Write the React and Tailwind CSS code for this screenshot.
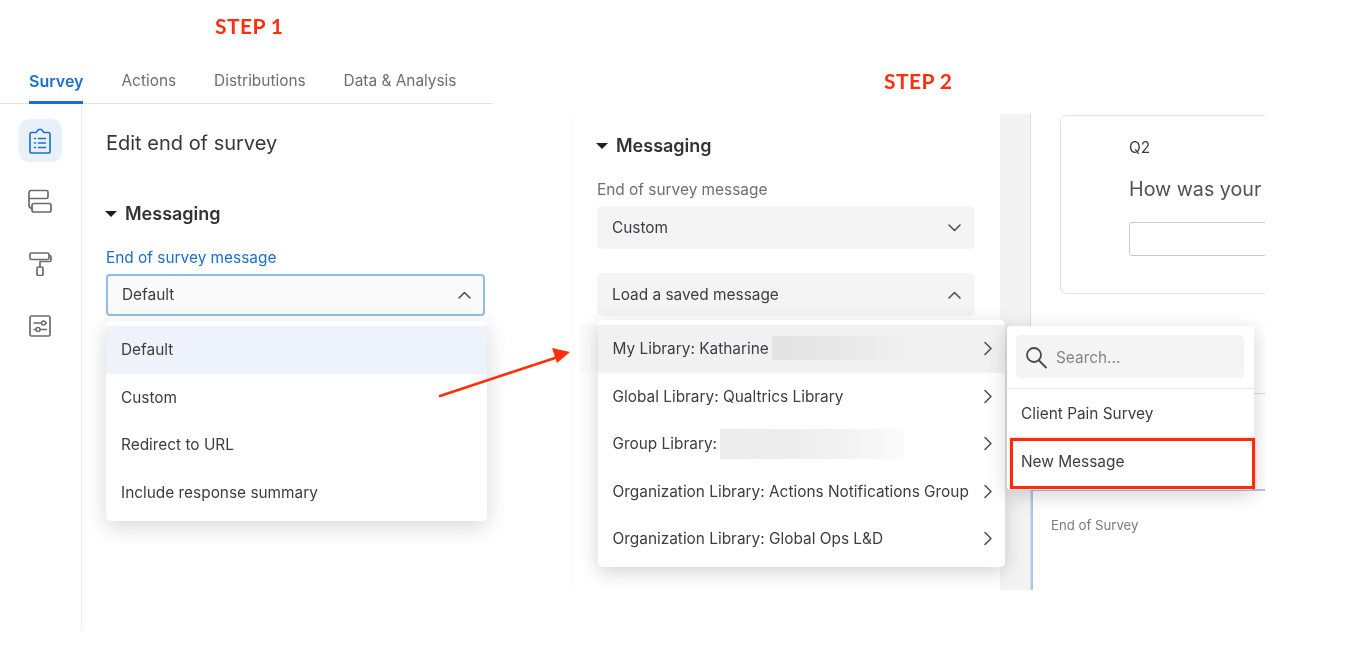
import React from "react";

const Chevron = ({ dir = "down", className = "" }) => {
  const d = { down: "M1 1 L6.500 6.500 L12 1", up: "M1 7 L6.500 1.500 L12 7" }[dir];
  return (
    <svg width="13" height="8" viewBox="0 0 13 8" fill="none" className={className}>
      <path d={d} stroke="#525256" strokeWidth="1.600" strokeLinecap="round" strokeLinejoin="round" />
    </svg>
  );
};

const ChevronRight = () => (
  <svg width="10" height="15" viewBox="0 0 10 15" fill="none">
    <path d="M2 1.500 L8 7.500 L2 13.500" stroke="#525256" strokeWidth="1.600" strokeLinecap="round" strokeLinejoin="round" />
  </svg>
);

const Caret = () => (
  <svg width="12" height="6" viewBox="0 0 12 6"><path d="M0 0 H12 L6 6 Z" fill="#1f1f22" /></svg>
);

const SurveyIcon = () => (
  <svg width="22" height="26" viewBox="0 0 22 26" fill="none" stroke="#1a6fcf" strokeWidth="1.600" strokeLinecap="round" strokeLinejoin="round">
    <path d="M7 4.500 H2.500 a1.500 1.500 0 0 0 -1.500 1.500 V23.500 a1.500 1.500 0 0 0 1.500 1.500 H19.500 a1.500 1.500 0 0 0 1.500 -1.500 V6 a1.500 1.500 0 0 0 -1.500 -1.500 H15 L12.500 1.500 h-3 Z" />
    <path d="M5.500 10.500 h1 M9.500 10.500 h7 M5.500 15 h1 M9.500 15 h7 M5.500 19.500 h1 M9.500 19.500 h7" />
  </svg>
);
const FlowIcon = () => (
  <svg width="24" height="24" viewBox="0 0 24 24" fill="none" stroke="#6b6b70" strokeWidth="1.700" strokeLinejoin="round" strokeLinecap="round">
    <path d="M1 9.500 H18.500 a1.500 1.500 0 0 0 1.500 -1.500 V3 a1.500 1.500 0 0 0 -1.500 -1.500 H3 a2 2 0 0 0 -2 2 V16 a3.500 3.500 0 0 0 3 3.500" />
    <rect x="4" y="14.500" width="19" height="8.500" rx="2" />
  </svg>
);
const RollerIcon = () => (
  <svg width="23" height="24" viewBox="0 0 23 24" fill="none" stroke="#6b6b70" strokeWidth="1.700" strokeLinejoin="round">
    <rect x="1" y="1" width="19" height="6.500" rx="1.500" />
    <path d="M20 3.500 h0.500 a1.500 1.500 0 0 1 1.500 1.500 v3 a1.500 1.500 0 0 1 -1.500 1.500 H11 V15" />
    <rect x="8" y="15" width="6" height="8.500" rx="1.500" />
  </svg>
);
const SlidersIcon = () => (
  <svg width="22" height="22" viewBox="0 0 22 22" fill="none" stroke="#6b6b70" strokeWidth="1.500">
    <rect x="1" y="1" width="20" height="20" rx="1.500" strokeWidth="1.700" />
    <path d="M4.500 8 H12.500 M16.500 8 H18 M4.500 14.500 H7 M11 14.500 H18" />
    <circle cx="14.500" cy="8" r="2" />
    <circle cx="9" cy="14.500" r="2" />
  </svg>
);

const Messaging = () => (
  <div className="flex items-center gap-[8px]">
    <Caret />
    <span className="text-[18px] font-semibold text-[#323236] leading-[24px]">Messaging</span>
  </div>
);

const GraySelect = ({ label, dir, className = "" }) => (
  <div className={`flex items-center justify-between w-[378px] h-[43px] pl-[15px] pr-[14px] rounded-[5px] bg-[#f4f4f4] ${className}`}>
    <span className="pt-[1px] text-[#3d3d42]">{label}</span>
    <Chevron dir={dir} />
  </div>
);

const Blur = ({ className }) => (
  <span className={`inline-block bg-linear-to-r ${className}`} />
);

const StepTitle = ({ children, className = "" }) => (
  <div className={`font-['Lato'] text-[21px] font-bold tracking-[0.4px] leading-[30px] text-[#ff2f0e] ${className}`}>{children}</div>
);

function LeftPanel() {
  const opts = ["Default", "Custom", "Redirect to URL", "Include response summary"];
  return (
    <section className="w-[493px] shrink-0 flex flex-col">
      <div className="h-[60px] pl-[215px] pt-[11px]"><StepTitle>STEP 1</StepTitle></div>
      <nav className="flex h-[44px] shrink-0 pl-[29px] gap-[38px] border-b border-[#e2e2e4] text-[#6e6e73]">
        <div className="h-[44px] flex items-center border-b-[3px] border-[#1a6fcf] text-[16px] font-semibold text-[#1a6fcf]">Survey</div>
        <div className="flex items-center pb-[1px]">Actions</div>
        <div className="flex items-center pb-[1px]">Distributions</div>
        <div className="flex items-center pb-[1px]">Data &amp; Analysis</div>
      </nav>
      <div className="flex h-[527px]">
        <aside className="w-[82px] shrink-0 border-r border-[#eeeeef] flex flex-col items-center pr-[1px] pt-[15px]">
          <div className="w-[43px] h-[43px] rounded-[10px] bg-[#e8f0fa] flex items-center justify-center"><SurveyIcon /></div>
          <div className="mt-[27px]"><FlowIcon /></div>
          <div className="mt-[39px]"><RollerIcon /></div>
          <div className="mt-[39px]"><SlidersIcon /></div>
        </aside>
        <div className="flex-1 relative pl-[24px] pt-[23px]">
          <h2 className="text-[20px] leading-[32px] text-[#37373b]">Edit end of survey</h2>
          <div className="mt-[43px] -ml-[1px]"><Messaging /></div>
          <div className="mt-[21px] leading-[22px] text-[#1a6fcf]">End of survey message</div>
          <div className="mt-[5px] w-[379px] h-[42px] flex items-center justify-between pl-[14px] pr-[12px] rounded-[4px] border-2 border-[#8fbcec] bg-[#fafafa]">
            <span className="text-[#3d3d42]">Default</span>
            <Chevron dir="up" />
          </div>
          <div className="absolute left-[24px] top-[217px] w-[381px] h-[200px] pt-[5px] rounded-[5px] bg-white shadow-[0_6px_22px_rgba(0,0,0,0.16)]">
            {opts.map((o, i) => (
              <div key={o} className={`h-[47.500px] flex items-center pl-[15px] text-[#3d3d42] ${i === 0 ? "bg-[#eef3fb]" : ""}`}>{o}</div>
            ))}
          </div>
        </div>
      </div>
    </section>
  );
}

function RightPanel() {
  const libs = [
    ["My Library: Katharine", <Blur key="a" className="absolute left-[174px] top-[11px] w-[134px] h-[24px] from-[#e3e3e3] via-[#e8e8e8] to-[#f0f0f0]" />],
    ["Global Library: Qualtrics Library"],
    ["Group Library:", <Blur key="b" className="absolute left-[122px] top-[9px] w-[184px] h-[30px] from-[#ececec] via-[#eeeeee] to-[#fbfbfb]" />],
    ["Organization Library: Actions Notifications Group"],
    ["Organization Library: Global Ops L&D"],
  ];
  return (
    <section className="ml-[80px] w-[692px] shrink-0 pt-[66px]">
      <div className="h-[48px] pl-[311px]"><StepTitle>STEP 2</StepTitle></div>
      <div className="relative h-[476px] flex overflow-hidden">
        <div className="w-[427px] shrink-0 pl-[23px] pt-[20px] border-l border-[#f8f8f8]">
          <div className="-ml-[1px]"><Messaging /></div>
          <div className="mt-[21px] leading-[22px] text-[#6e6e73]">End of survey message</div>
          <GraySelect label="Custom" dir="down" className="mt-[5px]" />
          <GraySelect label="Load a saved message" dir="up" className="mt-[24px]" />
        </div>
        <div className="w-[31px] shrink-0 bg-[#f3f3f3] border-r border-[#dcdcde]" />
        <div className="flex-1 overflow-hidden pt-[1px]">
          <div className="ml-[29px] w-[300px] h-[179px] rounded-[6px] border border-[#e3e3e5] pl-[68px] pt-[21px]">
            <div className="leading-[22px] text-[#3d3d42]">Q2</div>
            <div className="mt-[16px] text-[19.700px] leading-[28px] text-[#525256] whitespace-nowrap">How was your</div>
            <div className="mt-[19px] w-[200px] h-[34px] rounded-[3px] border border-[#c8c8cb] bg-white" />
          </div>
          <div className="mt-[99px] border-t border-[#dcdcde] h-[96px]" />
          <div className="h-[101px] border-t-2 border-l-2 border-[#a8c8ee] pl-[18px] pt-[24px] text-[13.200px] leading-[20px] text-[#7b7b80]">End of Survey</div>
        </div>

        <div className="absolute left-[7px] top-[211px] w-[20px] h-[47px] bg-[#fbfbfb]" />
        <div className="absolute left-[25px] top-[206px] w-[407px] h-[247px] pt-[5px] rounded-[5px] bg-white shadow-[0_5px_20px_rgba(0,0,0,0.18)] text-[#3d3d42]">
          {libs.map(([t, blur], i) => (
            <div key={t} className={`relative h-[47.500px] flex items-center justify-between pl-[14.500px] pr-[12px] ${i === 0 ? "bg-[#f1f1f1]" : ""}`}>
              <span className="whitespace-nowrap">{t}</span>
              {blur}
              <ChevronRight />
            </div>
          ))}
        </div>

        <div className="absolute left-[434px] top-[212px] w-[247px] h-[164px] rounded-[4px] bg-white shadow-[0_5px_20px_rgba(0,0,0,0.18)] text-[#3d3d42]">
          <div className="h-[63px] border-b border-[#e8e8e8] pt-[9px] px-[9px]">
            <div className="h-[43px] w-[228px] rounded-[5px] bg-[#f4f4f4] flex items-center pl-[8px] gap-[8px]">
              <svg width="24" height="24" viewBox="0 0 24 24" fill="none" stroke="#4a4a4e" strokeWidth="1.800" strokeLinecap="round">
                <circle cx="10" cy="10" r="7" />
                <path d="M15 15.500 L22 22.500" />
              </svg>
              <span className="pt-[2px] text-[#85858a]">Search...</span>
            </div>
          </div>
          <div className="h-[49px] flex items-center pl-[14px]">Client Pain Survey</div>
          <div className="h-[51px] ml-[3px] -mr-[1px] flex items-start pt-[9px] pl-[8px] border-[3px] border-[#ff2a0a] shadow-[0_0_2px_rgba(255,42,10,0.4)]">New Message</div>
        </div>
      </div>
    </section>
  );
}

export default function App() {
  return (
    <div className="relative w-[1353px] h-[671px] overflow-hidden bg-white flex text-[15.400px] font-['Inter',sans-serif] blur-[0.35px]">
      <LeftPanel />
      <RightPanel />
      <svg className="absolute left-[435px] top-[345px]" width="140" height="60" viewBox="0 0 140 60" fill="none">
        <path d="M5 51 L120 13" stroke="#ff2f0e" strokeWidth="2.600" strokeLinecap="round" />
        <path d="M135 7 L117 3 L122 18 Z" fill="#ff2f0e" />
      </svg>
    </div>
  );
}
